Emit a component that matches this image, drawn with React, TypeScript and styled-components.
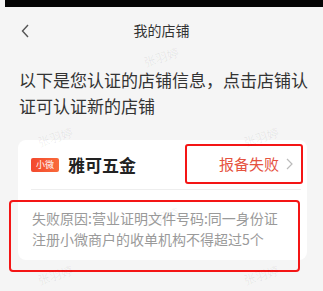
import styled, { createGlobalStyle } from "styled-components";

const GlobalStyle = createGlobalStyle`
    html, body {
        margin: 0;
        padding: 0;
        background: #f5f5f5;
    }
    body {
        font-family: "Noto Sans CJK SC", "Noto Sans", sans-serif;
    }
`;

const Screen = styled.div`
    position: relative;
    width: 323px;
    height: 291px;
    overflow: hidden;
    background: #f5f5f5;
`;

const StatusBar = styled.div`
    height: 7px;
    margin-left: 5px;
    background: #050505;
`;

const Header = styled.header`
    height: 46px;
    display: flex;
    align-items: center;
    justify-content: center;
    position: relative;
`;

const BackButton = styled.div`
    position: absolute;
    left: 20px;
    top: 17px;
    width: 12px;
    height: 14px;
    display: flex;
`;

const Title = styled.h1`
    margin: 0;
    font-size: 14px;
    font-weight: 400;
    color: #333333;
`;

const Intro = styled.p`
    margin: 14px 0 0 19px;
    width: 300px;
    font-size: 17px;
    line-height: 26px;
    color: #333333;
`;

const Card = styled.section`
    margin: 21px 0 0 18px;
    width: 289px;
    height: 120px;
    background: #ffffff;
    border-radius: 8px;
    display: flex;
    flex-direction: column;
`;

const StoreRow = styled.div`
    flex: none;
    height: 50px;
    box-sizing: border-box;
    display: flex;
    align-items: center;
    justify-content: space-between;
    margin-left: 13px;
    width: 270px;
    border-bottom: 1px solid #eeeeee;
`;

const StoreInfo = styled.div`
    display: flex;
    align-items: center;
    gap: 9px;
`;

const Badge = styled.span`
    width: 28px;
    height: 14px;
    border-radius: 2px;
    background: linear-gradient(90deg, #f3482e, #f96a3a);
    color: #ffffff;
    font-size: 9px;
    line-height: 14px;
    text-align: center;
`;

const StoreName = styled.span`
    font-size: 17px;
    font-weight: 700;
    color: #222222;
`;

const Highlight = styled.div`
    box-sizing: border-box;
    border: 2px solid #f41515;
    border-radius: 3px;
`;

const StatusBox = styled(Highlight)`
    width: 118px;
    height: 40px;
    margin-right: -2px;
    margin-top: -2px;
    display: flex;
    align-items: center;
    justify-content: flex-end;
    padding-right: 8px;
    gap: 7px;
`;

const StatusText = styled.span`
    font-size: 15px;
    color: #e5533f;
`;

const ReasonBox = styled(Highlight)`
    flex: none;
    width: 291px;
    height: 72px;
    margin: 10px 0 0 -9px;
    padding: 6px 0 0 21px;
    border-radius: 4px;
`;

const ReasonText = styled.p`
    margin: 0;
    width: 256px;
    font-size: 14px;
    line-height: 21px;
    color: #9a9a9a;
`;

const Watermark = styled.span<{ $x: number; $y: number }>`
    position: absolute;
    left: ${(p) => p.$x}px;
    top: ${(p) => p.$y}px;
    font-size: 12px;
    color: rgba(0, 0, 0, 0.07);
    transform: rotate(-18deg);
    pointer-events: none;
    white-space: nowrap;
`;

const marks = [
    { x: 143, y: 48 },
    { x: 37, y: 128 },
    { x: 243, y: 128 },
    { x: 143, y: 208 },
    { x: 37, y: 266 },
    { x: 243, y: 266 },
];

export default function App() {
    return (
        <>
            <GlobalStyle />
            <Screen>
                <StatusBar />
                <Header>
                    <BackButton>
                        <svg width="12" height="14" viewBox="0 0 12 14">
                            <path d="M8 1 L2.5 7 L8 13" fill="none" stroke="#555" strokeWidth="1.4" />
                        </svg>
                    </BackButton>
                    <Title>我的店铺</Title>
                </Header>

                <Intro>以下是您认证的店铺信息，点击店铺认证可认证新的店铺</Intro>

                <Card>
                    <StoreRow>
                        <StoreInfo>
                            <Badge>小微</Badge>
                            <StoreName>雅可五金</StoreName>
                        </StoreInfo>
                        <StatusBox>
                            <StatusText>报备失败</StatusText>
                            <svg width="7" height="12" viewBox="0 0 7 12">
                                <path d="M1 1 L6 6 L1 11" fill="none" stroke="#bbbbbb" strokeWidth="1.2" />
                            </svg>
                        </StatusBox>
                    </StoreRow>
                    <ReasonBox>
                        <ReasonText>失败原因:营业证明文件号码:同一身份证注册小微商户的收单机构不得超过5个</ReasonText>
                    </ReasonBox>
                </Card>

                {marks.map((m, i) => (
                    <Watermark key={i} $x={m.x} $y={m.y}>张羽婷</Watermark>
                ))}
            </Screen>
        </>
    );
}
